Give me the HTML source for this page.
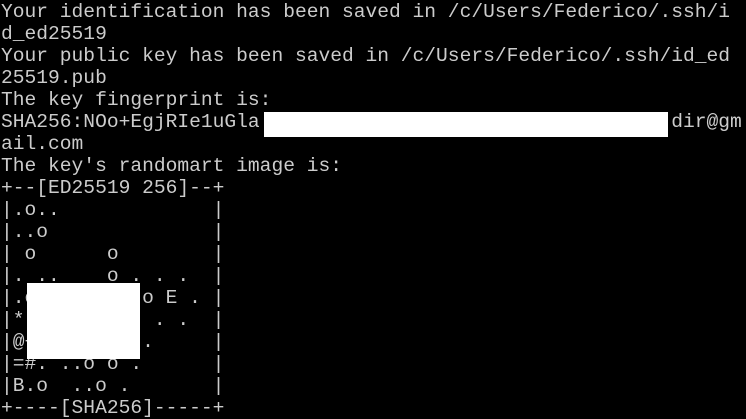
<!DOCTYPE html>
<html><head><meta charset="utf-8"><style>
html,body{margin:0;padding:0;background:#000;width:746px;height:419px;overflow:hidden}
pre{margin:0;position:absolute;left:1px;top:1px;font-family:"Liberation Mono","DejaVu Sans Mono",monospace;font-size:19.6px;line-height:22px;color:#cccccc;white-space:pre}
.b{position:absolute;background:#fff}
</style></head><body>
<pre>Your identification has been saved in /c/Users/Federico/.ssh/i
d_ed25519
Your public key has been saved in /c/Users/Federico/.ssh/id_ed
25519.pub
The key fingerprint is:
SHA256:NOo+EgjRIe1uGla                                   dir@gm
ail.com
The key's randomart image is:
+--[ED25519 256]--+
|.o..             |
|..o              |
| o      o        |
|. ..    o . . .  |
|.o         o E . |
|*.          . .  |
|@+         .     |
|=#. ..o o .      |
|B.o  ..o .       |
+----[SHA256]-----+</pre>
<div class="b" style="left:264px;top:112px;width:404px;height:25px"></div>
<div class="b" style="left:27px;top:283px;width:113px;height:76px"></div>
</body></html>
